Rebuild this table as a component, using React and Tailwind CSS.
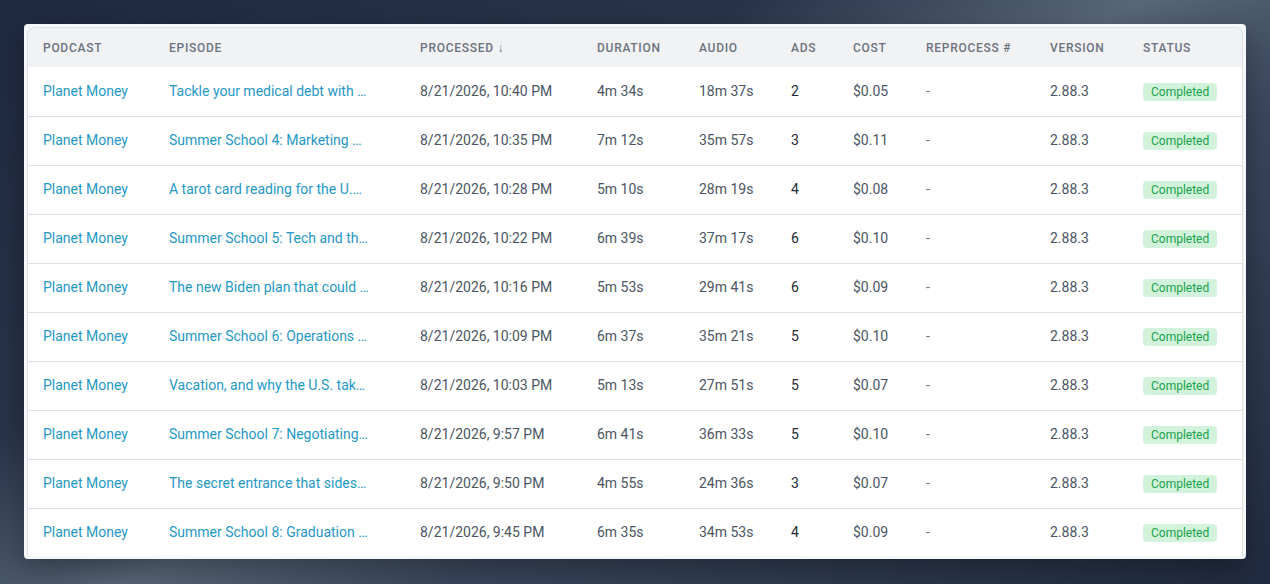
const rows = [
  ["Tackle your medical debt with …", "8/21/2026, 10:40 PM", "4m 34s", "18m 37s", 2, "$0.05"],
  ["Summer School 4: Marketing …", "8/21/2026, 10:35 PM", "7m 12s", "35m 57s", 3, "$0.11"],
  ["A tarot card reading for the U.…", "8/21/2026, 10:28 PM", "5m 10s", "28m 19s", 4, "$0.08"],
  ["Summer School 5: Tech and th…", "8/21/2026, 10:22 PM", "6m 39s", "37m 17s", 6, "$0.10"],
  ["The new Biden plan that could …", "8/21/2026, 10:16 PM", "5m 53s", "29m 41s", 6, "$0.09"],
  ["Summer School 6: Operations …", "8/21/2026, 10:09 PM", "6m 37s", "35m 21s", 5, "$0.10"],
  ["Vacation, and why the U.S. tak…", "8/21/2026, 10:03 PM", "5m 13s", "27m 51s", 5, "$0.07"],
  ["Summer School 7: Negotiating…", "8/21/2026, 9:57 PM", "6m 41s", "36m 33s", 5, "$0.10"],
  ["The secret entrance that sides…", "8/21/2026, 9:50 PM", "4m 55s", "24m 36s", 3, "$0.07"],
  ["Summer School 8: Graduation …", "8/21/2026, 9:45 PM", "6m 35s", "34m 53s", 4, "$0.09"],
];

const headers = ["Podcast", "Episode", "Processed ↓", "Duration", "Audio", "Ads", "Cost", "Reprocess #", "Version", "Status"];

export default function App() {
  return (
    <div className="w-[1270px] h-[584px] overflow-hidden bg-[linear-gradient(150deg,#1f2940_0%,#29344a_33%,#586779_50%,#3a475d_64%,#212b41_100%)] pt-6 pl-6 font-['Roboto',sans-serif]">
      <div className="w-[1222px] h-[535px] flex p-[3px] bg-[#f6f7f8] rounded-[4px] shadow-[0_10px_30px_rgba(0,0,0,0.35)]">
        <div className="flex-1 overflow-hidden rounded-t-lg border-x border-t border-[#dcdfe3] bg-white">
          <table className="w-full table-fixed border-collapse text-left">
            <colgroup>
              <col className="w-[126px]" />
              <col className="w-[251px]" />
              <col className="w-[177px]" />
              <col className="w-[102px]" />
              <col className="w-[92px]" />
              <col className="w-[62px]" />
              <col className="w-[73px]" />
              <col className="w-[124px]" />
              <col className="w-[93px]" />
              <col />
            </colgroup>
            <thead className="bg-[#f1f2f4]">
              <tr className="h-[39px]">
                {headers.map((h) => (
                  <th key={h} className="pl-[15px] text-[12px] font-medium uppercase tracking-[0.06em] text-[#6b7280] whitespace-nowrap">
                    {h}
                  </th>
                ))}
              </tr>
            </thead>
            <tbody className="text-[14px]">
              {rows.map((r, i) => (
                <tr key={i} className="h-[49px] border-b border-[#dcdfe3]">
                  <td className="pl-[15px] text-[#1f98c6] whitespace-nowrap">Planet Money</td>
                  <td className="pl-[15px] text-[#1f98c6] whitespace-nowrap overflow-hidden">{r[0]}</td>
                  <td className="pl-[15px] text-[#4b5563] whitespace-nowrap">{r[1]}</td>
                  <td className="pl-[15px] text-[#4b5563]">{r[2]}</td>
                  <td className="pl-[15px] text-[#4b5563]">{r[3]}</td>
                  <td className="pl-[15px] text-[#1f2937]">{r[4]}</td>
                  <td className="pl-[15px] text-[#4b5563]">{r[5]}</td>
                  <td className="pl-[15px] text-[#6b7280]">-</td>
                  <td className="pl-[15px] text-[#4b5563]">2.88.3</td>
                  <td className="pl-[15px]">
                    <span className="inline-block rounded-[4px] bg-[#d2f2dc] px-[8px] py-[1px] text-[12px] leading-[16px] text-[#16a34a]">
                      Completed
                    </span>
                  </td>
                </tr>
              ))}
            </tbody>
          </table>
        </div>
      </div>
    </div>
  );
}
